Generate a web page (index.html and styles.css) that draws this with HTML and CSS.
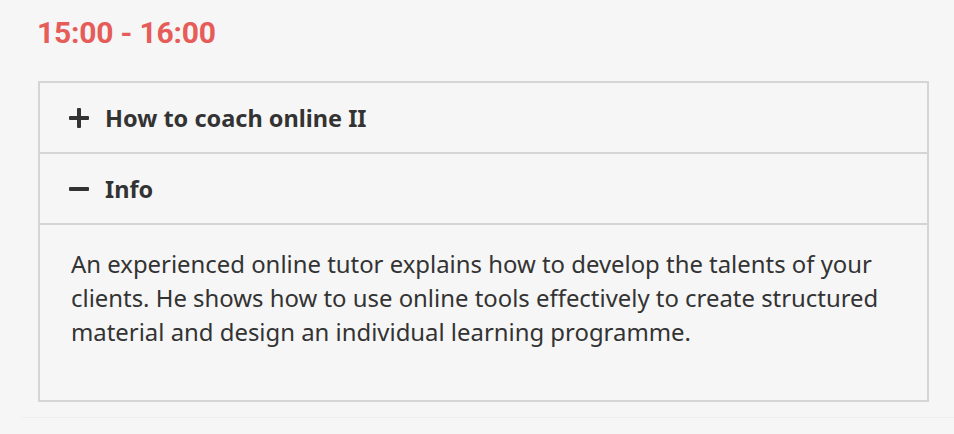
FILE: index.html
```html
<!DOCTYPE html>
<html lang="en">
<head>
<meta charset="utf-8">
<link rel="stylesheet" href="styles.css">
</head>
<body>
<div class="page">
  <h2 class="time">15:00 - 16:00</h2>
  <div class="accordion">
    <div class="row">
      <svg class="icon" width="20" height="20" viewBox="0 0 20 20"><rect x="0" y="8" width="20" height="4" rx="1" fill="#333"/><rect x="8" y="0" width="4" height="20" rx="1" fill="#333"/></svg>
      <span class="row-title">How to coach online II</span>
    </div>
    <div class="row">
      <svg class="icon" width="20" height="20" viewBox="0 0 20 20"><rect x="0" y="8" width="20" height="4" rx="1" fill="#333"/></svg>
      <span class="row-title">Info</span>
    </div>
    <div class="content">
      <p>An experienced online tutor explains how to develop the talents of your clients. He shows how to use online tools effectively to create structured material and design an individual learning programme.</p>
    </div>
  </div>
  <div class="rule"></div>
</div>
</body>
</html>
```
FILE: styles.css
```css
html, body {
  margin: 0;
  padding: 0;
  background: #f6f6f6;
}
.page {
  padding: 14px 0 0 0;
  font-family: "Noto Sans", "Open Sans", sans-serif;
  color: #333;
}
.time {
  margin: 0 0 0 37px;
  font-family: Roboto, sans-serif;
  font-weight: 700;
  font-size: 30px;
  letter-spacing: -0.2px;
  line-height: 38px;
  color: #e55c59;
}
.accordion {
  margin: 29px 0 0 38px;
  width: 887px;
  border: 2px solid #d5d5d5;
}
.row {
  display: flex;
  align-items: center;
  gap: 16px;
  height: 69px;
  padding-left: 29px;
  border-bottom: 2px solid #d5d5d5;
}
.icon {
  flex: none;
}
.row-title {
  font-weight: 700;
  font-size: 23.5px;
  color: #333;
}
.content {
  padding: 22px 31px 51px 31px;
}
.content p {
  margin: 0;
  font-size: 23.9px;
  line-height: 34px;
  color: #333;
}
.rule {
  margin: 15px 0 0 22px;
  height: 1px;
  background: #efefef;
}
```
